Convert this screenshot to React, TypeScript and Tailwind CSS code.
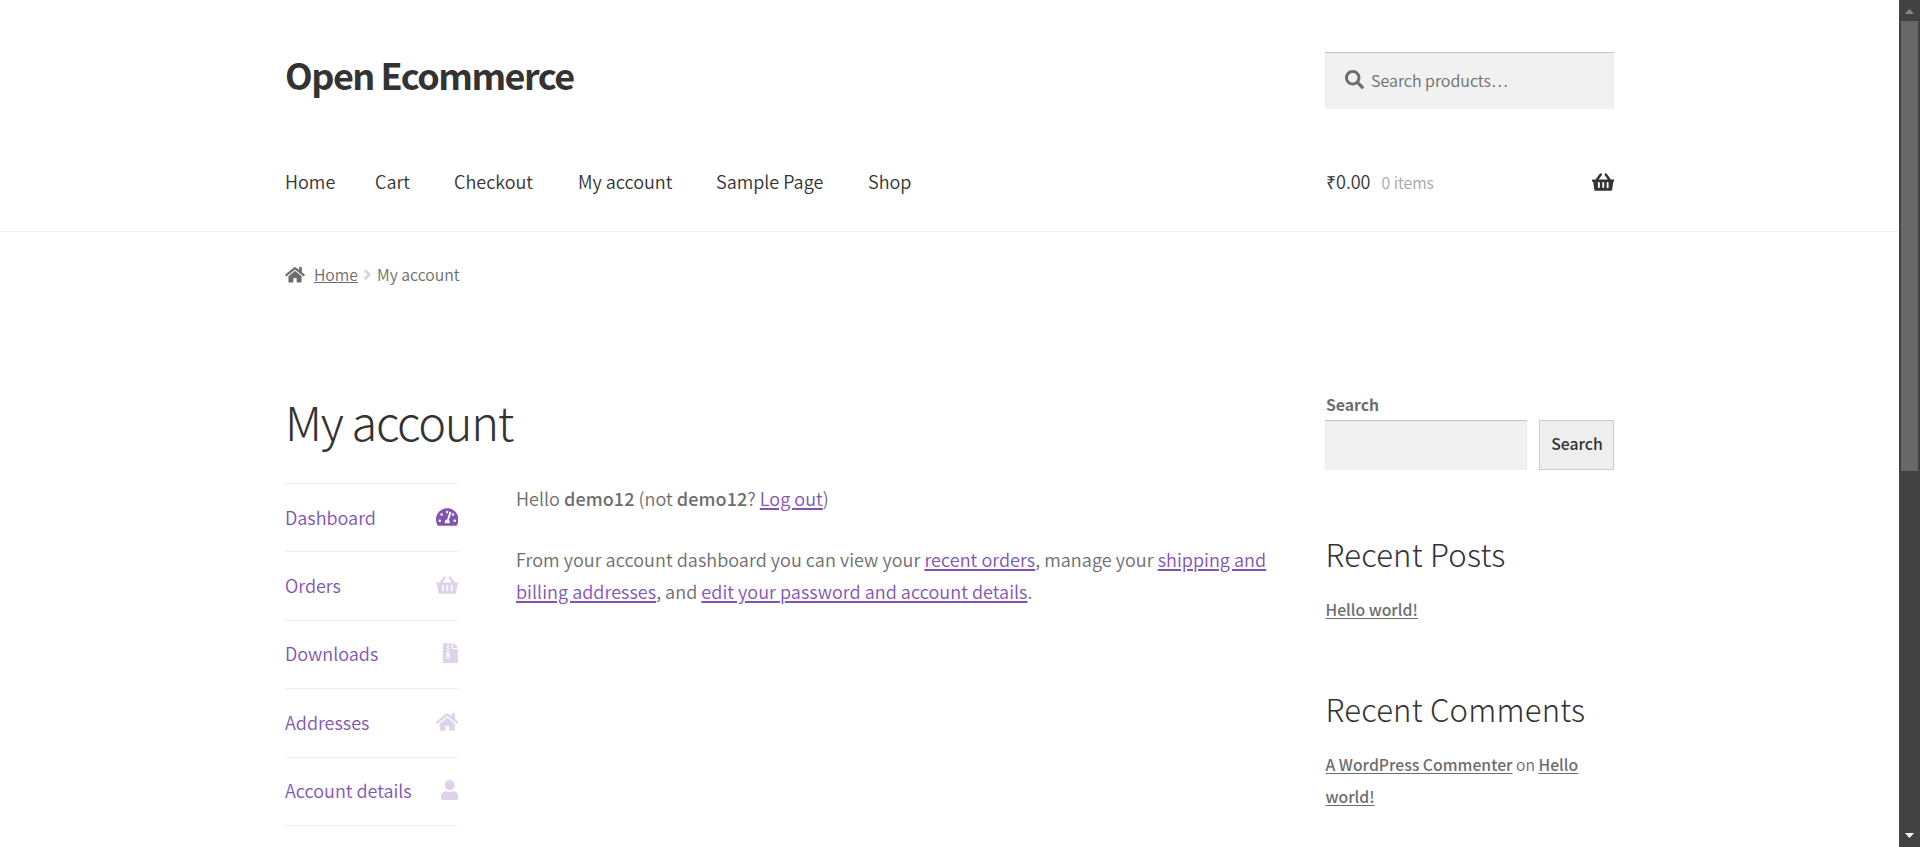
import type { ReactNode } from "react";
import {
  FaAngleRight,
  FaFileArchive,
  FaHome,
  FaSearch,
  FaShoppingBasket,
  FaTachometerAlt,
  FaUser,
} from "react-icons/fa";

const navItems = [
  { label: "Home", width: "w-[90px]" },
  { label: "Cart", width: "w-[79px]" },
  { label: "Checkout", width: "w-[124px]" },
  { label: "My account", width: "w-[138px]" },
  { label: "Sample Page", width: "w-[152px]" },
  { label: "Shop", width: "w-[60px]" },
];

const accountItems = [
  { label: "Dashboard", icon: FaTachometerAlt, iconClass: "h-5 w-[22.5px]", rowClass: "h-[68px] pb-px" },
  { label: "Orders", icon: FaShoppingBasket, iconClass: "h-5 w-[22.5px] opacity-25", rowClass: "h-[69px] pb-[2px]" },
  { label: "Downloads", icon: FaFileArchive, iconClass: "h-5 w-[15px] opacity-25", rowClass: "h-[68px] pb-[3px]" },
  { label: "Addresses", icon: FaHome, iconClass: "h-5 w-[22.5px] opacity-25", rowClass: "h-[69px] pb-[2px]" },
  { label: "Account details", icon: FaUser, iconClass: "h-5 w-[17.5px] opacity-25", rowClass: "h-[68px] pb-[3px]" },
];

function PurpleLink({ children }: { children: ReactNode }) {
  return (
    <a href="#" className="text-[#7f54b3] underline decoration-2 underline-offset-2">
      {children}
    </a>
  );
}

function GreyLink({ children }: { children: ReactNode }) {
  return (
    <a href="#" className="font-medium underline decoration-1 underline-offset-2">
      {children}
    </a>
  );
}

function Header() {
  return (
    <header className="h-[232px] border-b border-[#f0f0f0] pl-[285px] text-[#333333]">
      <div className="w-[1329px] pt-[52px]">
        <div className="flex h-[57px] justify-between">
          <a href="#" className="mt-[2px] text-[36px] leading-[40px] font-bold tracking-[-1.5px]">
            Open Ecommerce
          </a>
          <div className="flex h-[57px] w-[289px] items-center bg-[#f1f1f1] pl-5 text-[#6d6d6d] shadow-[inset_0_1px_1px_rgba(0,0,0,0.2)]">
            <FaSearch className="mb-[2px] size-[19px]" />
            <span className="mb-px ml-[7px] text-[16px] leading-8">Search products…</span>
          </div>
        </div>
        <div className="mt-[56px] flex h-8 justify-between">
          <nav className="flex text-[18px] leading-8">
            {navItems.map((item) => (
              <a key={item.label} href="#" className={`${item.width} whitespace-nowrap`}>
                {item.label}
              </a>
            ))}
          </nav>
          <a href="#" className="flex w-[289px] items-center pl-px leading-8">
            <span className="text-[18px]">₹0.00</span>
            <span className="mt-[3px] ml-[11px] grow text-[15.75px] text-[#a5a5a5]">0 items</span>
            <FaShoppingBasket className="mt-px h-5 w-[22.5px]" />
          </a>
        </div>
      </div>
    </header>
  );
}

function Breadcrumb() {
  return (
    <div className="flex h-8 items-center text-[15.75px] leading-8">
      <FaHome className="mb-px h-[17.5px] w-[20px]" />
      <a href="#" className="ml-[9px] underline decoration-1 underline-offset-[1px]">
        Home
      </a>
      <FaAngleRight className="mx-[3px] mb-[2px] h-[17px] w-[13px] text-[#d5d5d5]" />
      <span>My account</span>
    </div>
  );
}

function Account() {
  return (
    <main className="w-[982px]">
      <h1 className="text-[47px] leading-[60px] font-light tracking-[-1.3px] text-[#333333]">My account</h1>
      <div className="mt-[32px] flex">
        <ul className="w-[173px] shrink-0 border-t border-[#eeeeee]">
          {accountItems.map(({ label, icon: Icon, iconClass, rowClass }) => (
            <li
              key={label}
              className={`${rowClass} flex items-center justify-between border-b border-[#eeeeee] text-[#7f54b3]`}
            >
              <a href="#" className="text-[18px] leading-8 whitespace-nowrap">
                {label}
              </a>
              <Icon className={iconClass} />
            </li>
          ))}
        </ul>
        <div className="-mt-px ml-[58px] w-[751px] text-[18px] leading-8 tracking-[0.05px]">
          <p>
            Hello <strong className="font-medium">demo12</strong> (not{" "}
            <strong className="font-medium">demo12</strong>? <PurpleLink>Log out</PurpleLink>)
          </p>
          <p className="mt-[29px] whitespace-nowrap">
            From your account dashboard you can view your <PurpleLink>recent orders</PurpleLink>, manage your{" "}
            <PurpleLink>shipping and</PurpleLink>
            <br />
            <PurpleLink>billing addresses</PurpleLink>, and{" "}
            <PurpleLink>edit your password and account details</PurpleLink>.
          </p>
        </div>
      </div>
    </main>
  );
}

function Sidebar() {
  return (
    <aside className="ml-[58px] w-[289px] text-[15.75px] leading-8">
      <div className="pl-px font-bold">Search</div>
      <div className="-mt-px flex justify-between">
        <div className="h-[50px] w-[202px] bg-[#f1f1f1] shadow-[inset_0_1px_1px_rgba(0,0,0,0.2)]" />
        <button className="h-[50px] w-[75px] border border-[#cccccc] bg-[#eeeeee] pb-[2px] pl-px font-medium text-[#333333]">
          Search
        </button>
      </div>
      <h2 className="mt-[62px] pl-[0.5px] text-[31px] leading-[44px] font-light tracking-[0.23px] text-[#333333]">
        Recent Posts
      </h2>
      <p className="mt-[18px] pl-[0.5px]">
        <GreyLink>Hello world!</GreyLink>
      </p>
      <h2 className="mt-[61px] pl-[0.5px] text-[31px] leading-[44px] font-light tracking-[0.23px] text-[#333333]">
        Recent Comments
      </h2>
      <p className="mt-[18px] pl-[0.5px]">
        <GreyLink>A WordPress Commenter</GreyLink> on <GreyLink>Hello</GreyLink>
        <br />
        <GreyLink>world!</GreyLink>
      </p>
    </aside>
  );
}

function Scrollbar() {
  return (
    <div className="flex w-[21px] flex-col items-center justify-between bg-[#424242]">
      <div className="flex flex-col items-center">
        <svg className="mt-[9px] h-[5px] w-[9px]" viewBox="0 0 9 5" fill="#868686">
          <path d="M4.5 0 9 5H0z" />
        </svg>
        <div className="mt-[7px] h-[450px] w-[17px] bg-[#686868]" />
      </div>
      <svg className="mb-[9px] h-[5px] w-[9px]" viewBox="0 0 9 5" fill="#ffffff">
        <path d="M0 0h9L4.5 5z" />
      </svg>
    </div>
  );
}

export default function App() {
  return (
    <div className="flex h-[847px] overflow-hidden bg-white font-['Noto_Sans_CJK_JP','Noto_Sans_CJK_SC','Open_Sans',sans-serif] font-[350] text-[#6d6d6d]">
      <div className="w-[1899px]">
        <Header />
        <div className="pt-[27px] pl-[285px]">
          <Breadcrumb />
          <div className="mt-[98px] flex">
            <div className="pt-[2px]">
              <Account />
            </div>
            <Sidebar />
          </div>
        </div>
      </div>
      <Scrollbar />
    </div>
  );
}
